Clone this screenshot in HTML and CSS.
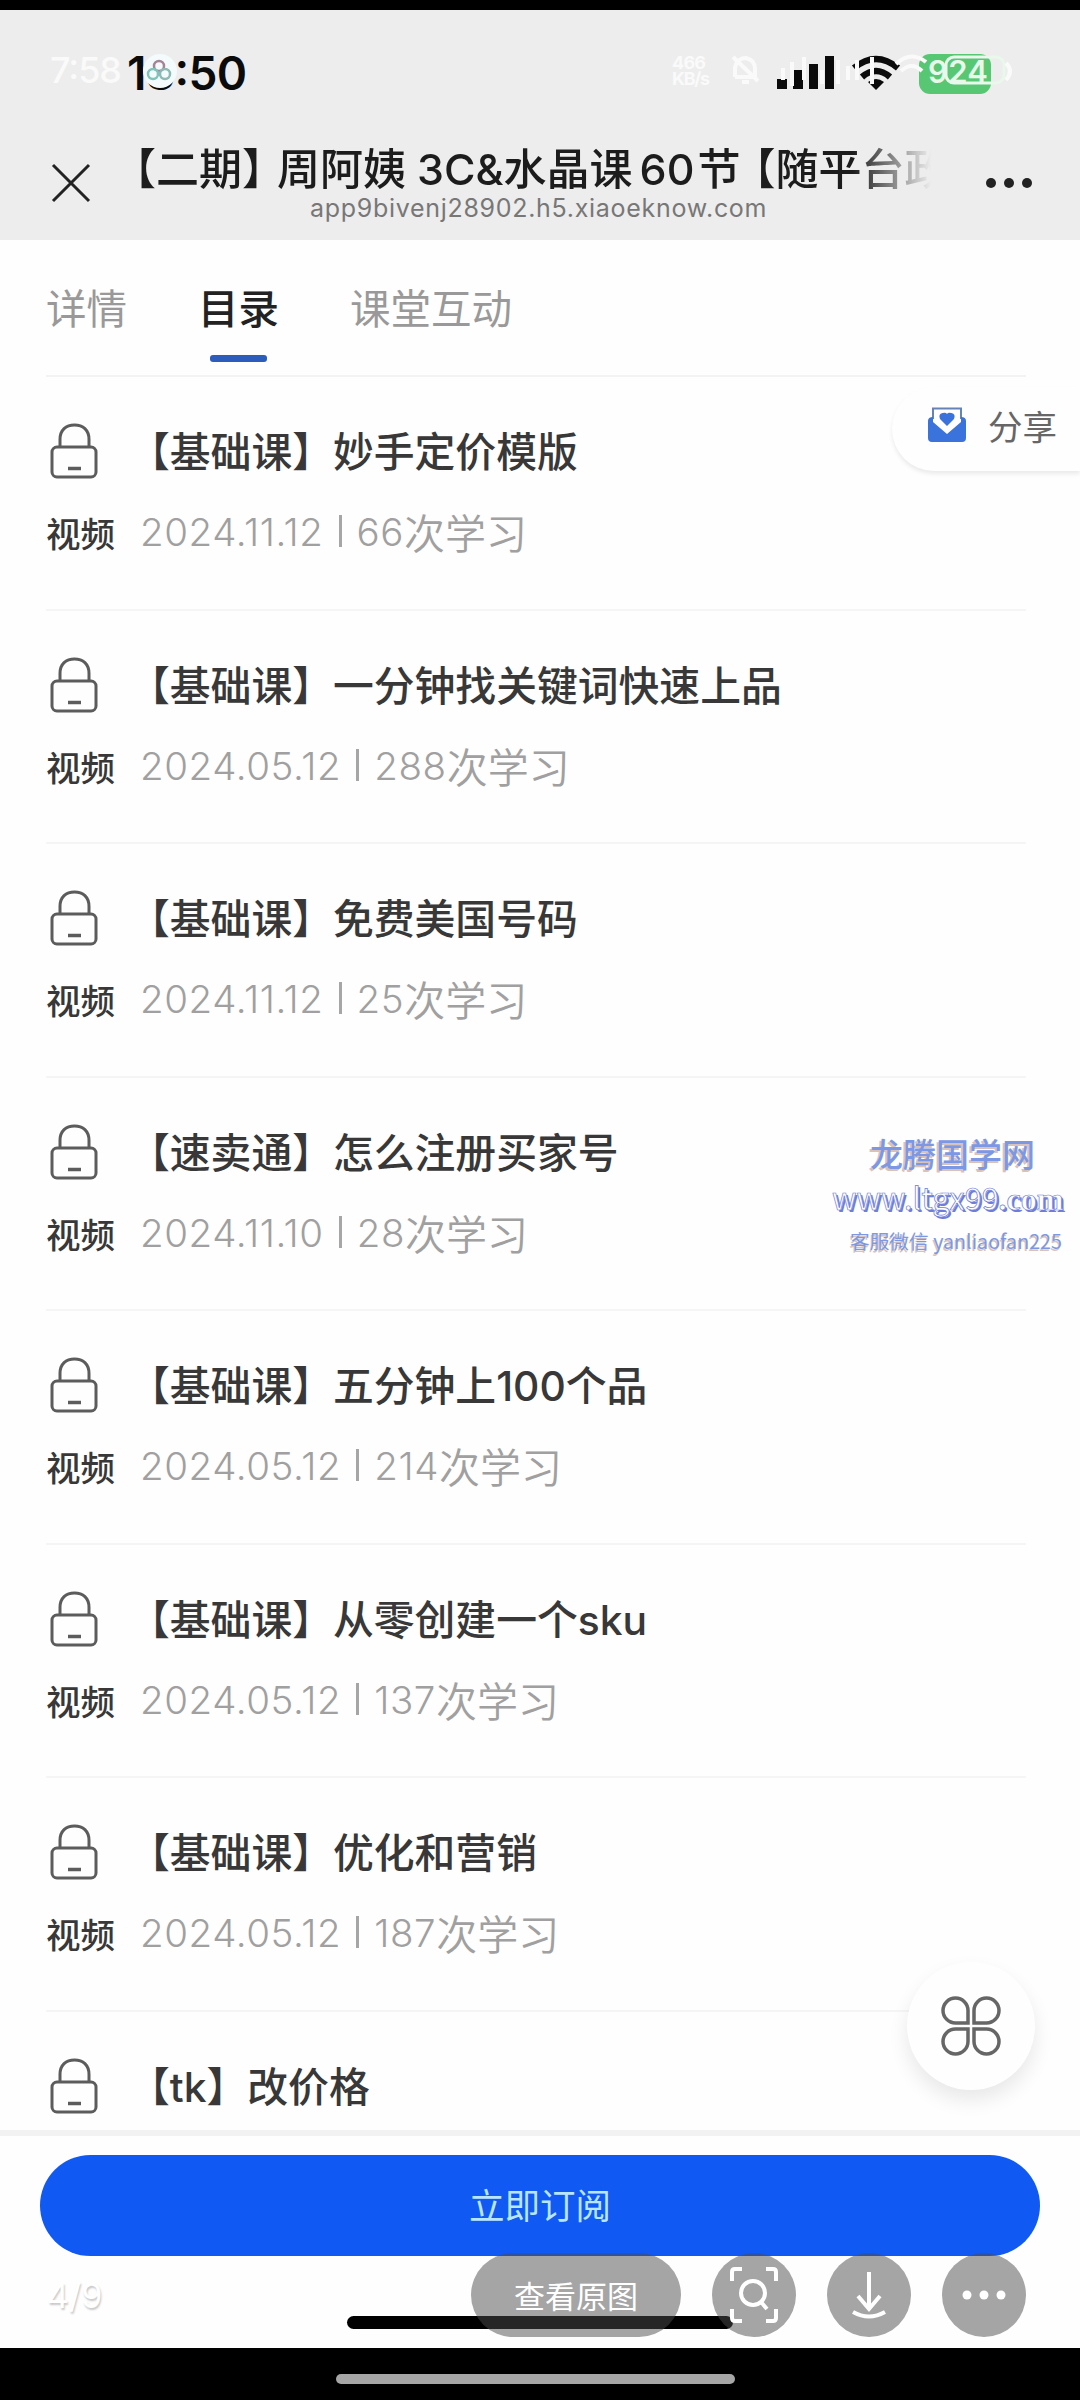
FILE: index.html
```html
<!DOCTYPE html>
<html lang="zh-CN">
<head>
  <meta charset="UTF-8">
  <meta name="viewport" content="width=device-width, initial-scale=1.0">
  <title>课程目录</title>
  <link rel="stylesheet" href="styles.css">
</head>
<body>
  <svg class="defs" width="0" height="0">
    <symbol id="lock" viewBox="0 0 48 56">
      <path d="M10 24V16.500C10 7 16 2 24.500 2S39 7 39 16.500V24"/>
      <rect x="2" y="24" width="44" height="30" rx="5"/>
      <path d="M18 45.500H31" stroke-width="3.500"/>
    </symbol>
  </svg>

  <header class="header">
    <svg class="status" width="1080" height="100" viewBox="0 10 1080 100">
      <text class="clock" x="127" y="90" textLength="120">13:50</text>
      <text class="ghost-clock" x="50" y="83" textLength="72">7:58</text>
      <circle cx="160" cy="71" r="17" fill="#f3fbfc"/>
      <g fill="none" stroke-width="2.500">
        <circle cx="159" cy="66" r="5" stroke="#a58398"/>
        <circle cx="153" cy="74" r="5" stroke="#7fc5b9"/>
        <circle cx="165" cy="74" r="5" stroke="#8fb9b4"/>
      </g>
      <!-- signal -->
      <path d="M777 89V79h10v10zM793 89V70h10v19zM809 89V64h9v25zM825 89V56h9v33z" fill="#0b0b0b"/>
      <!-- wifi -->
      <g fill="none" stroke="#0b0b0b" stroke-width="6.500">
        <path d="M854 68Q876 50 898 68"/>
        <path d="M862 77Q876 65 890 77"/>
      </g>
      <path d="M868 82Q876 76 884 82L876 90z" fill="#0b0b0b"/>
      <!-- battery -->
      <rect x="919" y="54" width="72" height="40" rx="11" fill="#58c774"/>
      <rect x="946" y="57" width="58" height="26" rx="8" fill="none" stroke="#e8f8eb" stroke-width="3"/>
      <text class="battery" x="928" y="83" textLength="60">924</text>
      <g fill="none" stroke="#fafafa" stroke-width="4">
        <path d="M735 77V68Q737 58 746 58Q755 60 755 69V77H735M742 82H749M733 57L758 81"/>
        <path d="M783 80V68M792 86V62M804 80V57M822 84V70M838 84V60M848 80V66M857 80V60M872 84V57"/>
        <path d="M896 64Q911 50 926 62M901 71Q912 61 922 71"/>
        <path d="M1006 63Q1014 71 1006 80"/>
      </g>
      <text class="ghost-speed" x="672" y="69" textLength="34">466</text>
      <text class="ghost-speed" x="672" y="85" textLength="38">KB/s</text>
    </svg>

    <div class="nav">
      <svg class="close" width="40" height="40" viewBox="0 0 40 40">
        <path d="M2 2L38 38M38 2L2 38"/>
      </svg>
      <div class="nav-text">
        <div class="nav-title"><span class="close-bracket">【二期】</span>周阿姨<span class="latin">3C&amp;</span>水晶课<span class="latin num">60</span><span class="section">节</span>【随平台政</div>
        <div class="nav-url">app9bivenj28902.h5.xiaoeknow.com</div>
      </div>
      <svg class="more" width="48" height="12" viewBox="0 0 48 12">
        <circle cx="6" cy="6" r="5"/><circle cx="24" cy="6" r="5"/><circle cx="42" cy="6" r="5"/>
      </svg>
    </div>
  </header>

  <nav class="tabs">
    <div class="tab">详情</div>
    <div class="tab active">目录</div>
    <div class="tab">课堂互动</div>
  </nav>

  <main class="list">
    <div class="item">
      <svg class="lock"><use href="#lock"/></svg>
      <div class="title">【基础课】妙手定价模版</div>
      <div class="type">视频</div>
      <div class="meta"><span class="date">2024.11.12</span><i></i><span class="count">66</span>次学习</div>
    </div>
    <div class="item">
      <svg class="lock"><use href="#lock"/></svg>
      <div class="title">【基础课】一分钟找关键词快速上品</div>
      <div class="type">视频</div>
      <div class="meta"><span class="date">2024.05.12</span><i></i><span class="count">288</span>次学习</div>
    </div>
    <div class="item">
      <svg class="lock"><use href="#lock"/></svg>
      <div class="title">【基础课】免费美国号码</div>
      <div class="type">视频</div>
      <div class="meta"><span class="date">2024.11.12</span><i></i><span class="count">25</span>次学习</div>
    </div>
    <div class="item">
      <svg class="lock"><use href="#lock"/></svg>
      <div class="title">【速卖通】怎么注册买家号</div>
      <div class="type">视频</div>
      <div class="meta"><span class="date">2024.11.10</span><i></i><span class="count">28</span>次学习</div>
    </div>
    <div class="item">
      <svg class="lock"><use href="#lock"/></svg>
      <div class="title">【基础课】五分钟上<span class="latin">100</span>个品</div>
      <div class="type">视频</div>
      <div class="meta"><span class="date">2024.05.12</span><i></i><span class="count">214</span>次学习</div>
    </div>
    <div class="item">
      <svg class="lock"><use href="#lock"/></svg>
      <div class="title">【基础课】从零创建一个<span class="latin">sku</span></div>
      <div class="type">视频</div>
      <div class="meta"><span class="date">2024.05.12</span><i></i><span class="count">137</span>次学习</div>
    </div>
    <div class="item">
      <svg class="lock"><use href="#lock"/></svg>
      <div class="title">【基础课】优化和营销</div>
      <div class="type">视频</div>
      <div class="meta"><span class="date">2024.05.12</span><i></i><span class="count">187</span>次学习</div>
    </div>
    <div class="item">
      <svg class="lock"><use href="#lock"/></svg>
      <div class="title">【<span class="latin">tk</span>】改价格</div>
    </div>
  </main>

  <footer class="footer">
    <button class="subscribe">立即订阅</button>
    <div class="home-bar"></div>
  </footer>

  <div class="system-bar"><div class="handle"></div></div>

  <div class="share">
    <svg width="40" height="36" viewBox="0 0 40 36">
      <path d="M6 12V1.500H34V12" fill="#fff" stroke="#6484b8" stroke-width="2"/>
      <path d="M1 14Q1 10 6 10V15L20 27L34 15V10Q39 10 39 14V31Q39 35 35 35H5Q1 35 1 31Z" fill="#3b73dc"/>
      <path d="M20 19L13 12Q11 7 15.500 6Q19 5 20 7Q21 5 24.500 6Q29 7 27 12Z" fill="#3b73dc"/>
    </svg>
    <span>分享</span>
  </div>

  <div class="watermark">
    <div class="wm-name">龙腾国学网</div>
    <div class="wm-url">www.ltgx99<b>.com</b></div>
    <div class="wm-contact">客服微信 yanliaofan225</div>
  </div>

  <div class="apps">
    <svg width="60" height="60" viewBox="0 0 60 60">
      <path d="M27 27H14.500A12.500 12.500 0 1 1 27 14.500Z"/>
      <path d="M33 27V14.500A12.500 12.500 0 1 1 45.500 27Z"/>
      <path d="M27 33V45.500A12.500 12.500 0 1 1 14.500 33Z"/>
      <path d="M33 33H45.500A12.500 12.500 0 1 1 33 45.500Z"/>
    </svg>
  </div>

  <div class="page-count">4/9</div>

  <div class="viewer-tools">
    <div class="pill">查看原图</div>
    <div class="round">
      <svg width="48" height="56" viewBox="0 0 48 56">
        <path d="M2 14V5Q2 2 5 2H12M36 2H43Q46 2 46 5V14M46 42V51Q46 54 43 54H36M12 54H5Q2 54 2 51V42"/>
        <circle cx="23" cy="26" r="12"/>
        <path d="M31 35L37 42"/>
      </svg>
    </div>
    <div class="round">
      <svg width="48" height="48" viewBox="0 0 48 48">
        <path d="M24 1V37M13 25L24 38L35 25M8 41Q24 50 40 41"/>
      </svg>
    </div>
    <div class="round">
      <svg class="dots" width="48" height="48" viewBox="0 0 48 48">
        <circle cx="7" cy="24" r="4.500"/><circle cx="24" cy="24" r="4.500"/><circle cx="41" cy="24" r="4.500"/>
      </svg>
    </div>
  </div>
</body>
</html>
```
FILE: styles.css
```css
* {
  box-sizing: border-box;
}
body {
  display: flex;
  flex-direction: column;
  position: relative;
  width: 1080px;
  height: 2400px;
  margin: 0;
  overflow: hidden;
  border-top: 10px solid #000;
  background: #fefefe;
  color: #383838;
  font-family: "Noto Sans CJK SC", sans-serif;
}
svg {
  display: block;
  flex: none;
}
.defs {
  position: absolute;
}
.latin {
  font-family: Inter, "Noto Sans CJK SC", sans-serif;
}

/* header */
.header {
  flex: none;
  height: 230px;
  background: #ededed;
}
.status text {
  font-family: Inter, sans-serif;
}
.clock {
  font-size: 46px;
  font-weight: 600;
  fill: #0b0b0b;
}
.ghost-clock {
  font-size: 36px;
  font-weight: 500;
  fill: #fafafa;
}
.battery {
  font-size: 31px;
  font-weight: 600;
  fill: #e8f8eb;
}
.ghost-speed {
  font-size: 18px;
  font-weight: 700;
  fill: #fafafa;
}
.nav {
  display: flex;
  height: 130px;
  padding-top: 24px;
}
.close {
  margin: 29px 0 0 51px;
  fill: none;
  stroke: #222;
  stroke-width: 3;
}
.nav-text {
  width: 844px;
  margin-left: 22px;
}
.nav-title {
  height: 64px;
  overflow: hidden;
  white-space: nowrap;
  line-height: 64px;
  font-size: 43px;
  font-weight: 500;
  color: #1c1c1c;
  -webkit-mask-image: linear-gradient(90deg, #000 740px, transparent 818px);
  mask-image: linear-gradient(90deg, #000 740px, transparent 818px);
}
.close-bracket {
  margin-right: -8px;
}
.nav-title .latin {
  margin: 0 0 0 11px;
}
.nav-title .num {
  margin: 0 3px 0 7px;
}
.section {
  margin-right: -8px;
}
.nav-url {
  margin-top: -5px;
  padding-left: 197px;
  line-height: 30px;
  font-family: Inter, sans-serif;
  font-size: 25px;
  letter-spacing: 0.700px;
  color: #777;
}
.more {
  margin: 43px 0 0 28px;
  fill: #222;
}

/* tabs */
.tabs {
  display: flex;
  flex: none;
  gap: 71px;
  height: 137px;
  margin: 0 54px 0 46px;
  border-bottom: 2px solid #f3f3f3;
  font-size: 40.500px;
  color: #999;
}
.tab {
  padding-top: 37px;
  line-height: 60px;
}
.active {
  font-weight: 500;
  color: #222;
}
.active::after {
  content: "";
  display: block;
  width: 57px;
  height: 7px;
  margin: 18px auto 0;
  border-radius: 3px;
  background: #2c5dbd;
}

/* lesson list */
.list {
  flex: none;
  height: 1753px;
  overflow: hidden;
  padding: 0 54px 0 46px;
}
.item {
  display: grid;
  grid-template-columns: 83px 1fr;
  grid-template-rows: 64px 64px;
  row-gap: 17px;
  height: 233.500px;
  padding-top: 41px;
  border-bottom: 2px solid #f5f5f5;
}
.lock {
  width: 48px;
  height: 56px;
  margin: 5px 0 0 4px;
  fill: none;
  stroke: #5c5c5c;
  stroke-width: 3;
}
.title {
  line-height: 64px;
  white-space: nowrap;
  font-size: 40.800px;
  font-weight: 500;
}
.type {
  line-height: 66px;
  font-size: 34.500px;
  font-weight: 500;
  white-space: nowrap;
}
.meta {
  display: flex;
  align-items: center;
  padding-left: 11px;
  line-height: 60px;
  font-size: 41px;
  font-weight: 350;
  color: #a0a0a0;
}
.date,
.count {
  padding-top: 2px;
  font-family: Inter, sans-serif;
  font-size: 38.500px;
  letter-spacing: 0.600px;
}
.meta i {
  width: 3px;
  height: 32px;
  margin: 0 15px;
  background: #a6a6a6;
}

/* footer */
.footer {
  flex: none;
  height: 218px;
  padding: 19px 40px 0;
  border-top: 6px solid #f2f2f2;
}
.subscribe {
  display: block;
  width: 1000px;
  height: 101px;
  padding-bottom: 5px;
  border: 0;
  border-radius: 51px;
  background: #1059f3;
  color: #b9e6ff;
  font-family: "Noto Sans CJK SC", sans-serif;
  font-size: 35.500px;
}
.home-bar {
  width: 386px;
  height: 13px;
  margin: 60px auto 0;
  border-radius: 7px;
  background: #000;
}
.system-bar {
  flex: none;
  height: 52px;
  padding: 26px 9px 0 0;
  background: #000;
}
.handle {
  width: 399px;
  height: 10px;
  margin: 0 auto;
  border-radius: 5px;
  background: #a6a6a6;
}

/* floating parts */
.share {
  display: flex;
  position: absolute;
  top: 377px;
  right: 0;
  width: 188px;
  height: 84px;
  padding: 20px 0 0 35px;
  gap: 21px;
  border-radius: 42px 0 0 42px;
  background: #fefefe;
  box-shadow: 0 3px 4px rgba(0, 0, 0, 0.08);
  line-height: 37px;
  font-size: 34.500px;
  color: #666;
}
.watermark {
  position: absolute;
  top: 1116px;
  left: 832px;
  width: 245px;
  color: #7c98e4;
}
.wm-name {
  padding-left: 38px;
  line-height: 55px;
  font-size: 33px;
  font-weight: 500;
  text-shadow: -2px 2px 0 #d9c3b8;
}
.wm-url {
  line-height: 32px;
  white-space: nowrap;
  font-family: "Noto Sans CJK SC", sans-serif;
  font-size: 30.500px;
  color: #fff;
  -webkit-text-stroke: 0.700px #6c7cdb;
  text-shadow: 2px 2px 0 #6f7ddc;
}
.wm-url b {
  font-family: "Liberation Serif", serif;
  font-size: 32px;
}
.wm-contact {
  padding-left: 18px;
  line-height: 51px;
  white-space: nowrap;
  font-size: 19.700px;
  text-shadow: -1px 2px 0 #d9c3b8;
}
.apps {
  display: flex;
  align-items: center;
  justify-content: center;
  position: absolute;
  top: 1952px;
  left: 907px;
  width: 128px;
  height: 128px;
  border-radius: 50%;
  background: #fefefe;
  box-shadow: 0 10px 20px rgba(0, 0, 0, 0.09);
}
.apps svg {
  fill: none;
  stroke: #666;
  stroke-width: 3.500;
}
.page-count {
  position: absolute;
  top: 2266px;
  left: 47px;
  line-height: 40px;
  font-family: Inter, sans-serif;
  font-size: 34px;
  color: #fff;
  text-shadow: 1px 2px 2px rgba(0, 0, 0, 0.22);
}
.viewer-tools {
  display: flex;
  position: absolute;
  top: 2243px;
  left: 471px;
  gap: 31px;
}
.pill,
.round {
  display: flex;
  align-items: center;
  justify-content: center;
  width: 84px;
  height: 84px;
  border-radius: 42px;
  background: rgba(76, 76, 76, 0.5);
}
.pill {
  width: 210px;
  padding-bottom: 2px;
  font-size: 31px;
  color: #fff;
}
.round svg {
  fill: none;
  stroke: #fff;
  stroke-width: 4;
}
.round .dots {
  fill: #fff;
  stroke: none;
}
```
